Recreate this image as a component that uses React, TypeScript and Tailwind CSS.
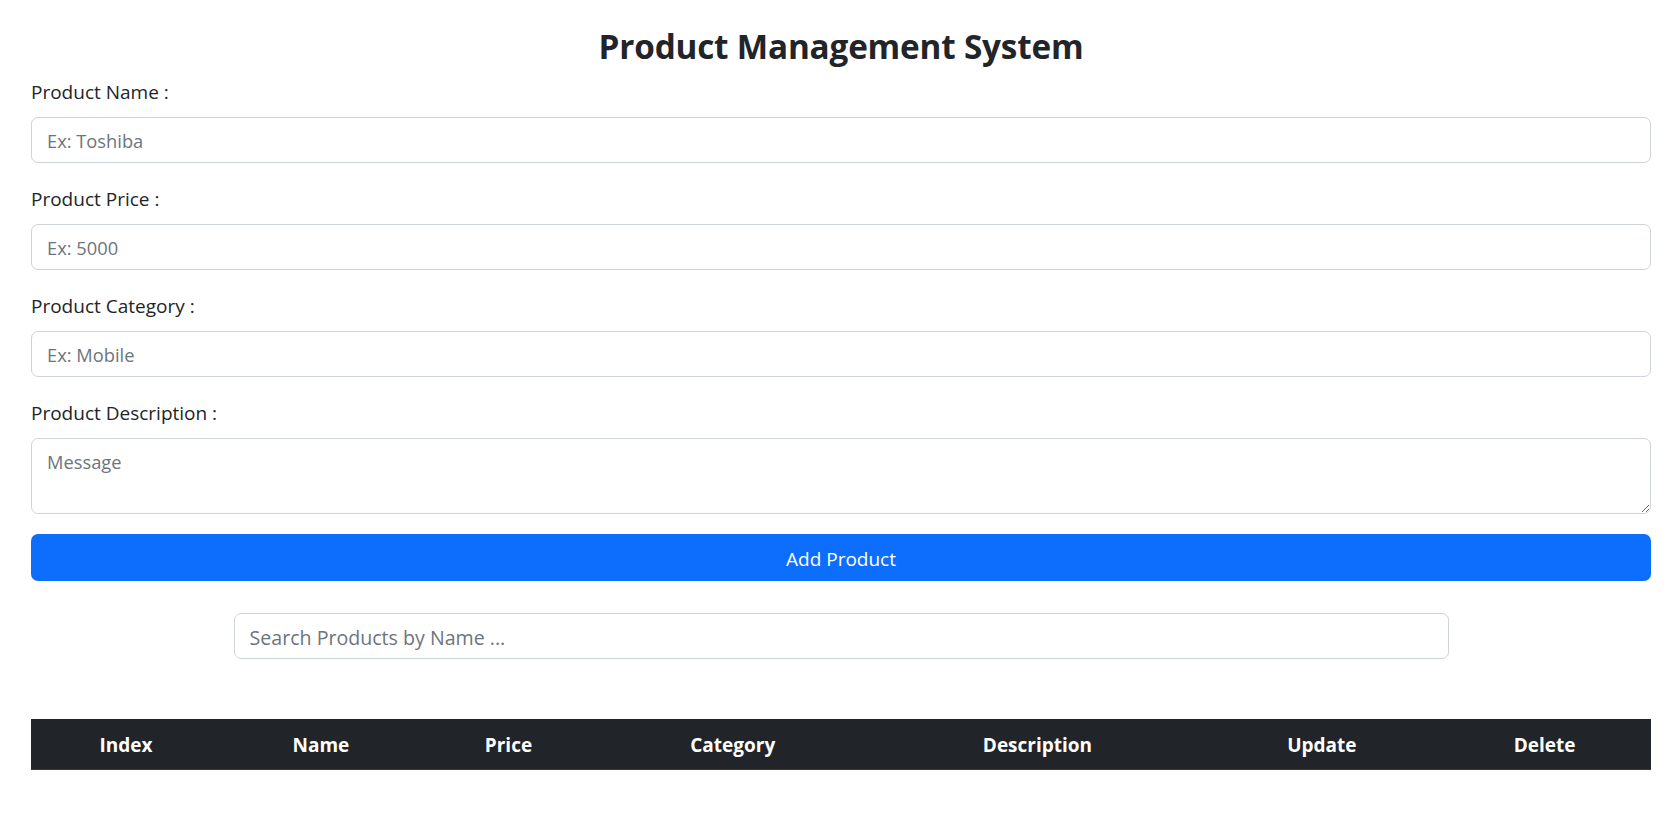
import React, { useState } from 'react';

export default function App() {
  const [name, setName] = useState('');
  const [price, setPrice] = useState('');
  const [category, setCategory] = useState('');
  const [desc, setDesc] = useState('');
  const [search, setSearch] = useState('');

  const inputCls =
    'block w-full h-[46px] px-[15px] border border-[#ced4da] rounded-[7px] bg-white text-[18.3px] text-[#212529] placeholder-[#6c757d] focus:outline-none';

  return (
    <div className="min-h-screen bg-white text-[#212529] font-['Open_Sans',sans-serif] pl-[31px] pr-[27px]">
      <h2 className="mt-[26px] h-[41px] leading-[41px] text-center text-[33.3px] font-bold tracking-[-0.2px]">
        Product Management System
      </h2>

      <div className="mt-[11px]">
        <div className="mb-[22px]">
          <label className="block h-[29px] leading-[29px] mb-[10px] text-[19px]">Product Name :</label>
          <input className={inputCls} placeholder="Ex: Toshiba" value={name} onChange={(e) => setName(e.target.value)} />
        </div>
        <div className="mb-[22px]">
          <label className="block h-[29px] leading-[29px] mb-[10px] text-[19px]">Product Price :</label>
          <input className={inputCls} placeholder="Ex: 5000" value={price} onChange={(e) => setPrice(e.target.value)} />
        </div>
        <div className="mb-[22px]">
          <label className="block h-[29px] leading-[29px] mb-[10px] text-[19px]">Product Category :</label>
          <input className={inputCls} placeholder="Ex: Mobile" value={category} onChange={(e) => setCategory(e.target.value)} />
        </div>
        <div className="mb-[20px]">
          <label className="block h-[29px] leading-[29px] mb-[10px] text-[19px]">Product Description :</label>
          <textarea
            className="block w-full h-[76px] px-[15px] py-[9px] leading-[28px] border border-[#ced4da] rounded-[7px] bg-white text-[18.3px] text-[#212529] placeholder-[#6c757d] focus:outline-none"
            placeholder="Message"
            value={desc}
            onChange={(e) => setDesc(e.target.value)}
          />
        </div>
        <button className="block w-full h-[47px] pt-[3px] rounded-[7px] bg-[#0d6efd] text-white text-[19px]">
          Add Product
        </button>
      </div>

      <div className="mt-[32px] w-3/4 mx-auto">
        <input
          className="block w-full h-[46px] px-[15px] pt-[3px] border border-[#ced4da] rounded-[7px] bg-white text-[19.6px] text-[#212529] placeholder-[#6c757d] focus:outline-none"
          placeholder="Search Products by Name ..."
          value={search}
          onChange={(e) => setSearch(e.target.value)}
        />
      </div>

      <table className="mt-[60px] w-full border-collapse">
        <thead>
          <tr className="bg-[#212529] text-white border-b border-[#373b3e]">
            {['Index', 'Name', 'Price', 'Category', 'Description', 'Update', 'Delete'].map((h) => (
              <th key={h} className="h-[50px] px-[10px] pt-[2px] text-center text-[19px] font-bold">
                {h}
              </th>
            ))}
          </tr>
        </thead>
        <tbody></tbody>
      </table>
    </div>
  );
}
